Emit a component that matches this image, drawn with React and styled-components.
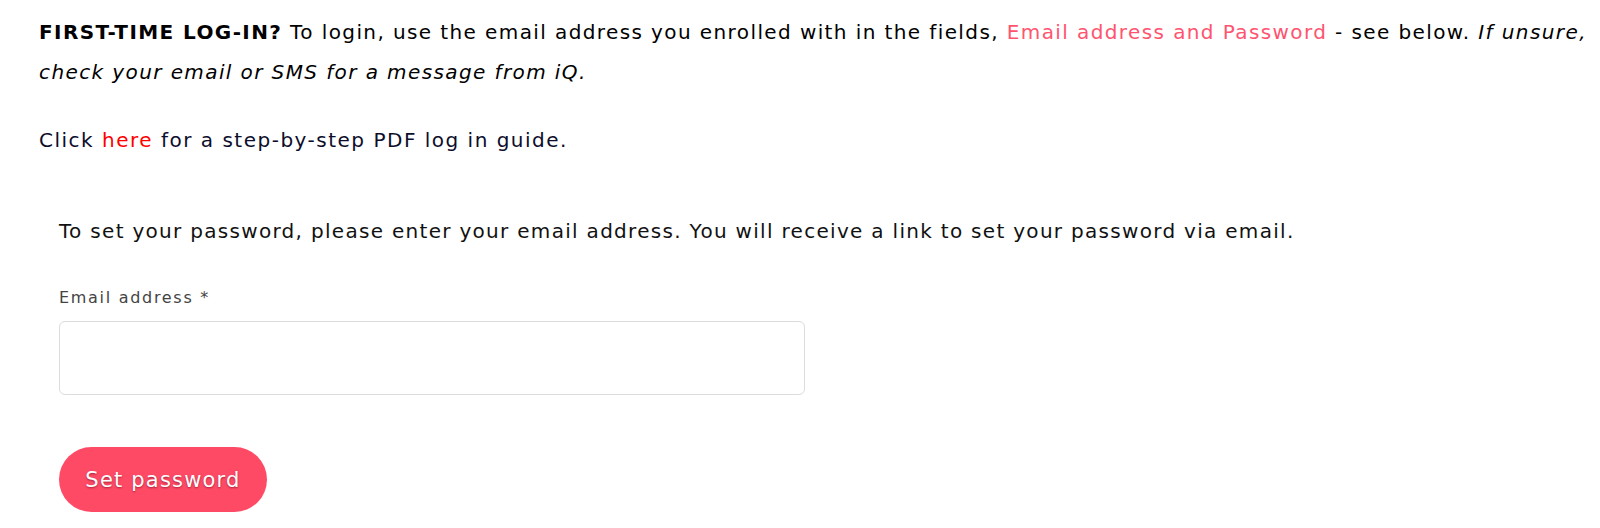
import React, { useState } from "react";
import styled, { createGlobalStyle } from "styled-components";

const GlobalStyle = createGlobalStyle`
  html, body {
    margin: 0;
    padding: 0;
    background: #ffffff;
  }
  body {
    font-family: "DejaVu Sans", "Open Sans", sans-serif;
    color: #000000;
  }
`;

const Page = styled.div`
  padding: 12px 0 0 39px;
  font-size: 20px;
  letter-spacing: 1.4px;
`;

const Intro = styled.p`
  margin: 0;
  line-height: 40px;
  color: #000000;
`;

const Guide = styled.p`
  margin: 28px 0 0 0;
  line-height: 40px;
  color: #0d0d2b;
  letter-spacing: 1.5px;
`;

const Accent = styled.span`
  color: ${(p) => (p.$strong ? "#ff0000" : "#ff5470")};
`;

const FormBox = styled.div`
  padding: 51px 0 0 20px;
  display: flex;
  flex-direction: column;
  align-items: flex-start;
`;

const Lead = styled.p`
  margin: 0;
  line-height: 40px;
  color: #111111;
  letter-spacing: 1.3px;
`;

const Label = styled.label`
  margin-top: 37px;
  font-size: 16px;
  line-height: 20px;
  letter-spacing: 1.7px;
  color: #444444;
`;

const Input = styled.input`
  margin-top: 13px;
  box-sizing: border-box;
  width: 746px;
  height: 74px;
  border: 1px solid #dcdcdc;
  border-radius: 6px;
  padding: 0 16px;
  font-size: 18px;
  font-family: inherit;
  outline: none;
`;

const Button = styled.button`
  margin-top: 52px;
  width: 208px;
  height: 65px;
  border: none;
  border-radius: 33px;
  background: #ff4a66;
  color: #ffffff;
  font-family: inherit;
  font-size: 21px;
  letter-spacing: 1.2px;
  text-shadow: 0 1px 2px rgba(90, 0, 20, 0.55);
  cursor: pointer;
`;

export default function App() {
  const [email, setEmail] = useState("");
  return (
    <>
      <GlobalStyle />
      <Page>
        <Intro>
          <b>FIRST-TIME LOG-IN?</b> To login, use the email address you enrolled
          with in the fields, <Accent>Email address and Password</Accent> - see
          below. <i>If unsure, check your email or SMS for a message from iQ.</i>
        </Intro>
        <Guide>
          Click <Accent $strong>here</Accent> for a step-by-step PDF log in guide.
        </Guide>
        <FormBox>
          <Lead>
            To set your password, please enter your email address. You will
            receive a link to set your password via email.
          </Lead>
          <Label htmlFor="email">Email address *</Label>
          <Input
            id="email"
            type="email"
            value={email}
            onChange={(e) => setEmail(e.target.value)}
          />
          <Button type="button">Set password</Button>
        </FormBox>
      </Page>
    </>
  );
}
